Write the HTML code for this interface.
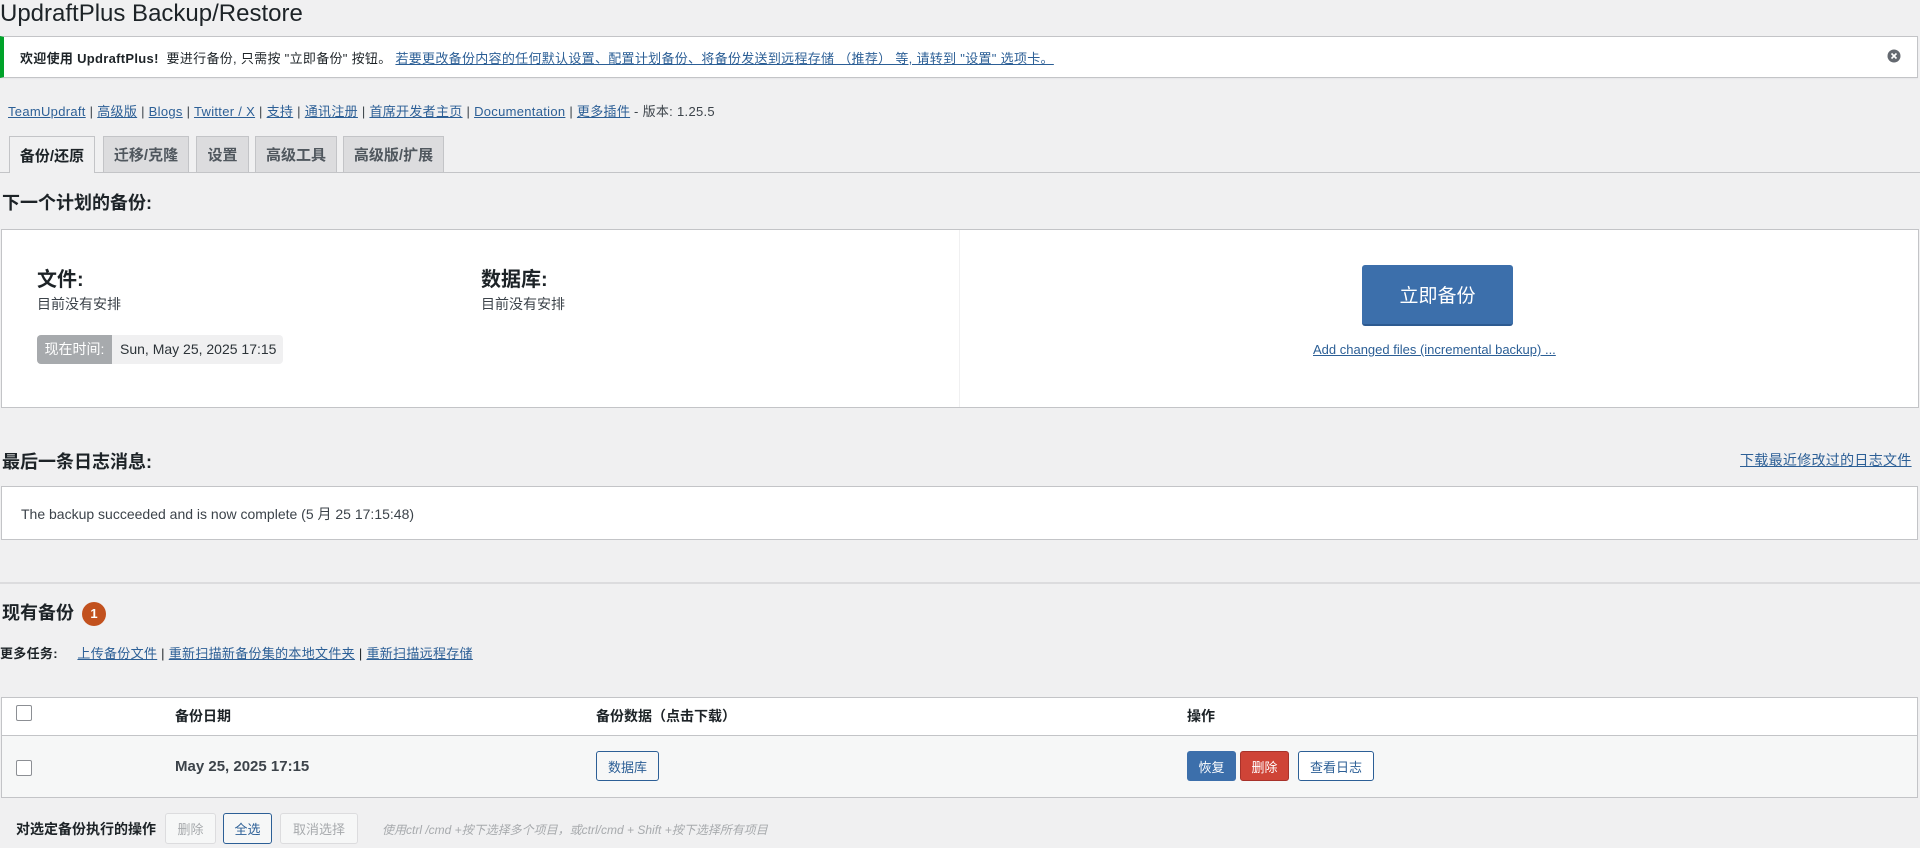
<!DOCTYPE html>
<html><head><meta charset="utf-8"><style>
*{box-sizing:border-box;margin:0;padding:0}
body{width:1920px;height:848px;background:#f0f0f1;font-family:"Liberation Sans","Noto Sans CJK SC",sans-serif;color:#1d2327;position:relative;overflow:hidden;font-size:14px}
.a{position:absolute;white-space:nowrap}
a{color:#2c5f96;text-decoration:underline}
.box{position:absolute;background:#fff;border:1px solid #c3c4c7}
.btn{position:absolute;border-radius:3px;font-size:14px;display:flex;align-items:center;justify-content:center}
.cb{position:absolute;width:16px;height:16px;border:1px solid #8c8f94;border-radius:2px;background:#fff}
.tab{position:absolute;top:136px;height:36px;border:1px solid #c3c4c7;border-bottom:none;background:#dcdcde;font-size:15px;font-weight:bold;color:#50575e;display:flex;align-items:center;justify-content:center}
</style></head><body>
<div class="a" style="left:0;top:0px;font-size:24px;color:#1d2327">UpdraftPlus Backup/Restore</div>

<div class="box" style="left:0;top:36px;width:1918px;height:42px;border-left:4px solid #00a32a;box-shadow:0 1px 1px rgba(0,0,0,.04)"></div>
<div class="a" style="left:20px;top:48px;font-size:13px;letter-spacing:0.3px"><b>欢迎使用 UpdraftPlus!</b>&nbsp; 要进行备份, 只需按 "立即备份" 按钮。 <a href="#">若要更改备份内容的任何默认设置、配置计划备份、将备份发送到远程存储 （推荐） 等, 请转到 "设置" 选项卡。</a></div>
<svg class="a" style="left:1887px;top:49px" width="14" height="14" viewBox="0 0 14 14"><circle cx="7" cy="7" r="6.5" fill="#646970"/><path d="M4.5 4.5l5 5M9.5 4.5l-5 5" stroke="#fff" stroke-width="1.6"/></svg>

<div class="a" style="left:8px;top:101px;font-size:13px;color:#3c434a;letter-spacing:0.3px"><a href="#">TeamUpdraft</a> | <a href="#">高级版</a> | <a href="#">Blogs</a> | <a href="#">Twitter / X</a> | <a href="#">支持</a> | <a href="#">通讯注册</a> | <a href="#">首席开发者主页</a> | <a href="#">Documentation</a> | <a href="#">更多插件</a> - 版本: 1.25.5</div>

<div class="a" style="left:0;top:172px;width:1920px;height:1px;background:#c3c4c7"></div>
<div class="tab" style="left:9px;width:86px;background:#f0f0f1;height:37px;color:#1d2327">备份/还原</div>
<div class="tab" style="left:103px;width:86px">迁移/克隆</div>
<div class="tab" style="left:196px;width:53px">设置</div>
<div class="tab" style="left:255px;width:82px">高级工具</div>
<div class="tab" style="left:343px;width:101px">高级版/扩展</div>

<div class="a" style="left:2px;top:189px;font-size:18px;font-weight:bold">下一个计划的备份:</div>
<div class="box" style="left:1px;top:229px;width:1918px;height:179px"></div>
<div class="a" style="left:959px;top:230px;width:1px;height:177px;background:#f0f0f1"></div>
<div class="a" style="left:37px;top:263px;font-size:20px;font-weight:bold">文件:</div>
<div class="a" style="left:37px;top:294px;font-size:14px;color:#3c434a">目前没有安排</div>
<div class="a" style="left:481px;top:263px;font-size:20px;font-weight:bold">数据库:</div>
<div class="a" style="left:481px;top:294px;font-size:14px;color:#3c434a">目前没有安排</div>
<div class="a" style="left:37px;top:335px;width:246px;height:29px;background:#f0f0f1;border-radius:4px"></div>
<div class="a" style="left:37px;top:335px;width:75px;height:29px;background:#a7aaad;border-radius:4px 0 0 4px;color:#fff;font-size:14px;line-height:29px;text-align:center">现在时间:</div>
<div class="a" style="left:120px;top:335px;line-height:29px;font-size:14px;color:#2c3338">Sun, May 25, 2025 17:15</div>
<div class="btn" style="left:1362px;top:265px;width:151px;height:61px;background:#3c6fab;color:#fff;font-size:19px;border-bottom:2px solid #2d5a90">立即备份</div>
<div class="a" style="left:1313px;top:342px;font-size:13px"><a href="#">Add changed files (incremental backup) ...</a></div>

<div class="a" style="left:2px;top:448px;font-size:18px;font-weight:bold">最后一条日志消息:</div>
<div class="a" style="left:1740px;top:450px;font-size:14px;letter-spacing:0.3px"><a href="#">下载最近修改过的日志文件</a></div>
<div class="box" style="left:1px;top:486px;width:1917px;height:54px"></div>
<div class="a" style="left:21px;top:504px;font-size:14px;color:#3c434a">The backup succeeded and is now complete (5 月 25 17:15:48)</div>

<div class="a" style="left:0;top:582px;width:1920px;height:2px;background:#dcdcde"></div>
<div class="a" style="left:2px;top:599px;font-size:18px;font-weight:bold">现有备份</div>
<div class="a" style="left:82px;top:602px;width:24px;height:24px;border-radius:50%;background:#c2511e;color:#fff;font-size:13px;font-weight:bold;text-align:center;line-height:24px">1</div>
<div class="a" style="left:0;top:643px;font-size:13px;color:#1d2327;letter-spacing:0.3px"><b>更多任务:</b>&nbsp;&nbsp;&nbsp;&nbsp; <a href="#">上传备份文件</a> | <a href="#">重新扫描新备份集的本地文件夹</a> | <a href="#">重新扫描远程存储</a></div>

<div class="box" style="left:1px;top:697px;width:1917px;height:101px"></div>
<div class="a" style="left:2px;top:735px;width:1915px;height:62px;background:#f6f7f7;border-top:1px solid #c3c4c7"></div>
<div class="cb" style="left:16px;top:705px"></div>
<div class="a" style="left:175px;top:706px;font-size:14px;font-weight:bold">备份日期</div>
<div class="a" style="left:596px;top:706px;font-size:14px;font-weight:bold">备份数据（点击下载）</div>
<div class="a" style="left:1187px;top:706px;font-size:14px;font-weight:bold">操作</div>
<div class="cb" style="left:16px;top:760px"></div>
<div class="a" style="left:175px;top:758px;font-size:15px;font-weight:bold;color:#3c434a">May 25, 2025 17:15</div>
<div class="btn" style="left:596px;top:751px;width:63px;height:30px;border:1px solid #2c5f96;color:#2c5f96;background:#f6f7f7;font-size:13px">数据库</div>
<div class="btn" style="left:1187px;top:751px;width:49px;height:30px;background:#3c6fab;color:#fff;font-size:13px">恢复</div>
<div class="btn" style="left:1240px;top:751px;width:49px;height:30px;background:#cf4437;border:1px solid #a8322a;color:#fff;font-size:13px">删除</div>
<div class="btn" style="left:1298px;top:751px;width:76px;height:30px;border:1px solid #2c5f96;color:#2c5f96;background:#fff;font-size:13px">查看日志</div>

<div class="a" style="left:16px;top:819px;font-size:14px;font-weight:bold">对选定备份执行的操作</div>
<div class="btn" style="left:165px;top:813px;width:51px;height:31px;border:1px solid #dcdcde;color:#a7aaad;background:#f6f7f7;font-size:13px">删除</div>
<div class="btn" style="left:223px;top:813px;width:49px;height:31px;border:1px solid #2c5f96;color:#2c5f96;background:#f6f7f7;font-size:13px">全选</div>
<div class="btn" style="left:280px;top:813px;width:78px;height:31px;border:1px solid #dcdcde;color:#a7aaad;background:#f6f7f7;font-size:13px">取消选择</div>
<div class="a" style="left:382px;top:821px;font-size:12px;font-style:italic;color:#a7aaad">使用ctrl /cmd +按下选择多个项目，或ctrl/cmd + Shift +按下选择所有项目</div>
</body></html>
